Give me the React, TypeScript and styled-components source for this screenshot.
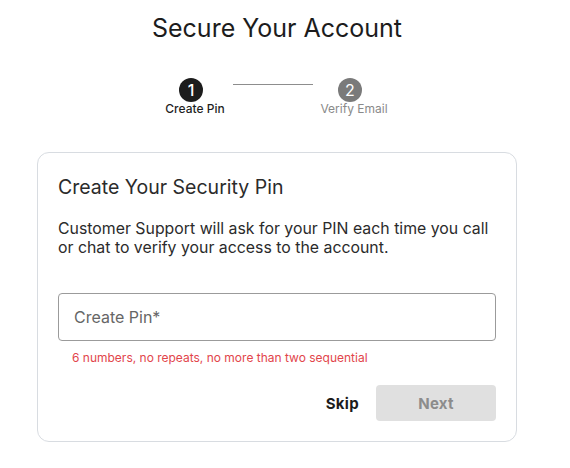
import styled, { createGlobalStyle } from 'styled-components';

const GlobalStyle = createGlobalStyle`
    body {
        margin: 0;
        background: #ffffff;
        font-family: Inter, "Noto Sans", sans-serif;
        color: #1f1f1f;
    }
`

interface StepProps {
    $active?: boolean
    $width: number
}

const Page = styled.div`
    width: 480px;
    padding-left: 37px;
    display: flex;
    flex-direction: column;
`

const Title = styled.h1`
    margin: 12px 0 0;
    font-size: 25px;
    font-weight: 400;
    line-height: 32px;
    text-align: center;
    color: #1c1c1c;
`

const Stepper = styled.div`
    display: flex;
    align-items: flex-start;
    margin: 34px 0 0 112px;
`

const Step = styled.div<StepProps>`
    width: ${p => p.$width}px;
    display: flex;
    flex-direction: column;
    align-items: center;
    font-size: 12px;
    line-height: 15px;
    font-weight: ${p => p.$active ? 500 : 400};
    color: ${p => p.$active ? '#1f1f1f' : '#8a8a8a'};
`

const StepLabel = styled.span`
    margin-top: -1px;
    padding-left: 8px;
    white-space: nowrap;
`

const StepIcon = styled.div<{ $active?: boolean }>`
    width: 24px;
    height: 24px;
    border-radius: 50%;
    background: ${p => p.$active ? '#1c1c1c' : '#7a7a7a'};
    color: #ffffff;
    font-size: 16px;
    display: flex;
    align-items: center;
    justify-content: center;
`

const Connector = styled.div`
    width: 80px;
    height: 1px;
    margin-top: 6px;
    background: #8d8d8d;
`

const Card = styled.section`
    margin-top: 36px;
    border: 1px solid #d8dce1;
    border-radius: 12px;
    padding: 22px 20px 20px;
    display: flex;
    flex-direction: column;
`

const CardTitle = styled.h2`
    margin: 0;
    font-size: 19.5px;
    font-weight: 400;
    line-height: 24px;
    color: #2b2b2b;
`

const Description = styled.p`
    margin: 20px 0 0;
    font-size: 15.85px;
    line-height: 19px;
    color: #2b2b2b;
`

const PinInput = styled.input`
    margin-top: 36px;
    height: 48px;
    box-sizing: border-box;
    border: 1px solid #9b9b9b;
    border-radius: 4px;
    padding: 0 15px;
    font-family: inherit;
    font-size: 16px;
    color: #1f1f1f;
    outline: none;
    &::placeholder {
        color: #666666;
    }
`

const Helper = styled.div`
    margin: 9px 0 0 14px;
    font-size: 12px;
    line-height: 16px;
    color: #e2454b;
`

const Actions = styled.div`
    margin-top: 19px;
    display: flex;
    justify-content: flex-end;
    align-items: center;
    gap: 17px;
`

const Button = styled.button<{ $filled?: boolean }>`
    height: 36px;
    width: ${p => p.$filled ? '120px' : 'auto'};
    padding: 0;
    border: none;
    border-radius: 4px;
    background: ${p => p.$filled ? '#e0e0e0' : 'transparent'};
    color: ${p => p.$filled ? '#8c8c8c' : '#1c1c1c'};
    font-family: inherit;
    font-size: 15px;
    font-weight: 700;
    letter-spacing: 0.3px;
    cursor: pointer;
`

export default function App() {
    return (
        <>
            <GlobalStyle />
            <Page>
                <Title>Secure Your Account</Title>
                <Stepper>
                    <Step $active $width={84}>
                        <StepIcon $active>1</StepIcon>
                        <StepLabel>Create Pin</StepLabel>
                    </Step>
                    <Connector />
                    <Step $width={74}>
                        <StepIcon>2</StepIcon>
                        <StepLabel>Verify Email</StepLabel>
                    </Step>
                </Stepper>
                <Card>
                    <CardTitle>Create Your Security Pin</CardTitle>
                    <Description>
                        Customer Support will ask for your PIN each time you call or chat to verify your access to the account.
                    </Description>
                    <PinInput placeholder="Create Pin*" />
                    <Helper>6 numbers, no repeats, no more than two sequential</Helper>
                    <Actions>
                        <Button>Skip</Button>
                        <Button $filled disabled>Next</Button>
                    </Actions>
                </Card>
            </Page>
        </>
    )
}
